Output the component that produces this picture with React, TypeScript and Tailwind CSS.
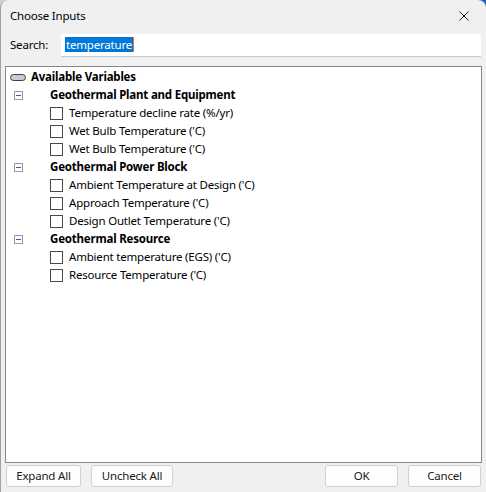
type Group = { name: string; items: string[] };

const groups: Group[] = [
  {
    name: "Geothermal Plant and Equipment",
    items: ["Temperature decline rate (%/yr)", "Wet Bulb Temperature ('C)", "Wet Bulb Temperature ('C)"],
  },
  {
    name: "Geothermal Power Block",
    items: ["Ambient Temperature at Design ('C)", "Approach Temperature ('C)", "Design Outlet Temperature ('C)"],
  },
  {
    name: "Geothermal Resource",
    items: ["Ambient temperature (EGS) ('C)", "Resource Temperature ('C)"],
  },
];

function Expander() {
  return (
    <span className="flex h-[9px] w-[9px] items-center justify-center border border-[#9a9a9a] bg-white">
      <span className="h-px w-[5px] bg-[#2f5fb0]" />
    </span>
  );
}

function Checkbox() {
  return <span className="h-[13px] w-[13px] border border-[#4a4a4a] bg-white" />;
}

function Button({ label, width }: { label: string; width: string }) {
  return (
    <button
      className={`${width} h-[22px] rounded-[3px] border border-[#d0d0d0] bg-[#fdfdfd] text-[#1a1a1a]`}
    >
      {label}
    </button>
  );
}

export default function App() {
  return (
    <div className="h-[492px] w-[486px] bg-[linear-gradient(90deg,#c9d3dc_0%,#c9d3dc_60%,#1f63b0_100%)] font-['Noto_Sans',sans-serif]">
      <div className="flex h-full w-full flex-col rounded-t-[8px] border-l border-[#a0a0a0] bg-[#f0f0f0] text-[11.5px] tracking-[-0.2px] text-black">
        {/* title bar */}
        <div className="flex h-[32px] items-center justify-between pl-[9px] pr-[17px]">
          <span>Choose Inputs</span>
          <svg width="10" height="10" viewBox="0 0 10 10">
            <path d="M0.5 0.5L9.5 9.5M9.5 0.5L0.5 9.5" stroke="#1a1a1a" strokeWidth="1" />
          </svg>
        </div>

        {/* search */}
        <div className="flex h-[26px] items-center pl-[9px] pr-[5px]">
          <span className="w-[51px]">Search:</span>
          <div className="flex h-[23px] flex-1 items-center border-b border-[#c8c8c8] bg-white pl-[4px]">
            <span className="bg-[#0078d7] px-px leading-[15px] text-white">temperature</span>
            <span className="h-[15px] w-px bg-[#e07030]" />
          </div>
        </div>

        {/* tree */}
        <div className="mx-[4px] mt-[8px] flex-1 border border-[#828790] bg-white pt-[1px]">
          <div className="flex h-[18px] items-center pl-[4px]">
            <svg width="16" height="7" viewBox="0 0 16 7" className="mr-[5px]">
              <rect x="0.5" y="0.5" width="15" height="6" rx="3" fill="#c8ccd2" stroke="#3a3f47" />
            </svg>
            <span className="font-bold">Available Variables</span>
          </div>
          {groups.map((g) => (
            <div key={g.name}>
              <div className="flex h-[18px] items-center pl-[8px]">
                <Expander />
                <span className="ml-[27px] font-bold">{g.name}</span>
              </div>
              {g.items.map((item, i) => (
                <div key={i} className="flex h-[18px] items-center gap-[6px] pl-[44px]">
                  <Checkbox />
                  <span>{item}</span>
                </div>
              ))}
            </div>
          ))}
        </div>

        {/* buttons */}
        <div className="flex h-[29px] items-center px-[5px] pb-[3px]">
          <div className="flex gap-[10px]">
            <Button label="Expand All" width="w-[75px]" />
            <Button label="Uncheck All" width="w-[82px]" />
          </div>
          <div className="ml-auto flex gap-[10px]">
            <Button label="OK" width="w-[73px]" />
            <Button label="Cancel" width="w-[73px]" />
          </div>
        </div>
      </div>
    </div>
  );
}
